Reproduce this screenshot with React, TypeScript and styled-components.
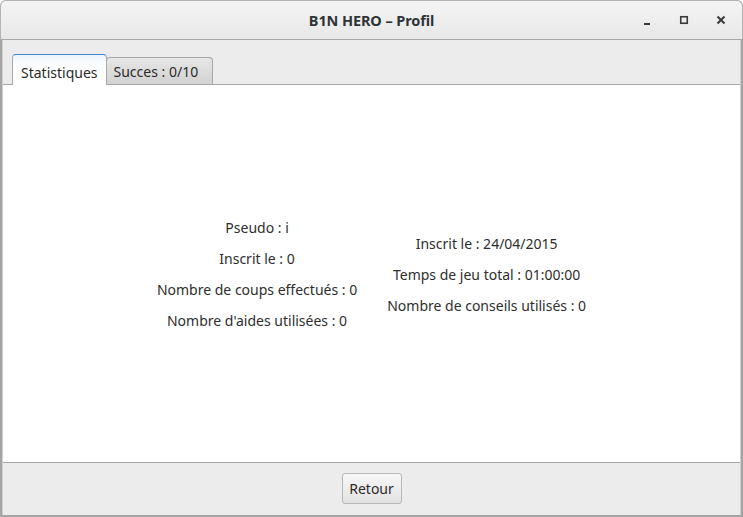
import React from "react";
import styled, { createGlobalStyle } from "styled-components";

const Global = createGlobalStyle`
  html, body { margin: 0; padding: 0; background: #ffffff; }
  body { font-family: "Noto Sans", "Open Sans", sans-serif; }
  * { box-sizing: border-box; }
`;

const Window = styled.div`
  width: 743px;
  height: 517px;
  display: flex;
  flex-direction: column;
  background: #a4a4a4;
  border-radius: 6px 6px 0 0;
  overflow: hidden;
`;

const TitleBar = styled.div`
  height: 40px;
  flex: none;
  display: flex;
  align-items: center;
  justify-content: center;
  position: relative;
  background: linear-gradient(#f4f4f4, #e8e8e8);
  border: 1px solid #b4b4b4;
  border-bottom-color: #a8a8a8;
  border-radius: 6px 6px 0 0;
`;

const Title = styled.div`
  font-family: "Noto Sans", sans-serif;
  font-weight: 700;
  font-size: 14.5px;
  color: #2e3436;
  letter-spacing: -0.1px;
`;

const Controls = styled.div`
  position: absolute;
  right: 3px;
  top: 0;
  height: 38px;
  display: flex;
  align-items: center;
`;

const CtrlButton = styled.div`
  width: 37px;
  height: 38px;
  display: flex;
  align-items: center;
  justify-content: center;
`;

const Body = styled.div`
  flex: 1;
  display: flex;
  flex-direction: column;
  margin: 0 2px 2px 2px;
  background: #ececec;
  border-left: 1px solid #d0d0d0;
  border-right: 1px solid #d0d0d0;
`;

const TabHeader = styled.div`
  height: 45px;
  flex: none;
  display: flex;
  align-items: flex-end;
  padding-left: 9px;
  border-bottom: 1px solid #a8a8a8;
  background: #ececec;
`;

const Tab = styled.div<{ $active?: boolean }>`
  height: ${(p) => (p.$active ? 31 : 27)}px;
  margin-bottom: ${(p) => (p.$active ? -1 : 0)}px;
  padding: 0 ${(p) => (p.$active ? 8 : 14)}px 0 ${(p) => (p.$active ? 8 : 7)}px;
  display: flex;
  align-items: center;
  padding-top: ${(p) => (p.$active ? 4 : 0)}px;
  font-size: 14px;
  color: #2a2a2a;
  border: 1px solid #a8a8a8;
  border-bottom: none;
  border-top: 1px solid ${(p) => (p.$active ? "#3a87d0" : "#a8a8a8")};
  border-radius: 4px 4px 0 0;
  background: ${(p) =>
    p.$active
      ? "linear-gradient(#eef4fb, #ffffff 40%, #ffffff)"
      : "linear-gradient(#e6e6e6, #d2d2d2)"};
  position: relative;
  z-index: ${(p) => (p.$active ? 2 : 1)};
  margin-left: ${(p) => (p.$active ? 0 : -1)}px;
`;

const Content = styled.div`
  flex: 1;
  background: #ffffff;
  display: flex;
  align-items: center;
  justify-content: center;
  gap: 30px;
  padding-top: 2px;
`;

const Column = styled.div`
  display: flex;
  flex-direction: column;
  align-items: center;
  gap: 13px;
`;

const Line = styled.div`
  font-size: 14px;
  line-height: 18px;
  color: #2e2e2e;
  white-space: nowrap;
`;

const Footer = styled.div`
  height: 53px;
  flex: none;
  border-top: 1px solid #a8a8a8;
  background: #ececec;
  display: flex;
  align-items: flex-start;
  justify-content: center;
  padding-top: 10px;
`;

const Button = styled.button`
  width: 60px;
  height: 31px;
  font-family: "Noto Sans", sans-serif;
  font-size: 14px;
  color: #2a2a2a;
  border: 1px solid #b8b8b8;
  border-radius: 3px;
  background: linear-gradient(#f8f8f8, #e2e2e2);
  padding: 0;
`;

export default function App() {
  return (
    <>
      <Global />
      <Window>
        <TitleBar>
          <Title>B1N HERO – Profil</Title>
          <Controls>
            <CtrlButton>
              <svg width="10" height="10" viewBox="0 0 10 10">
                <rect x="2" y="8" width="6" height="2" fill="#3a3a3a" />
              </svg>
            </CtrlButton>
            <CtrlButton>
              <svg width="10" height="10" viewBox="0 0 10 10">
                <rect x="1.75" y="1.75" width="6.5" height="6.5" fill="none" stroke="#3a3a3a" strokeWidth="1.6" />
              </svg>
            </CtrlButton>
            <CtrlButton>
              <svg width="10" height="10" viewBox="0 0 10 10">
                <path d="M1.5 1.5 L8.5 8.5 M8.5 1.5 L1.5 8.5" stroke="#3a3a3a" strokeWidth="2" />
              </svg>
            </CtrlButton>
          </Controls>
        </TitleBar>
        <Body>
          <TabHeader>
            <Tab $active>Statistiques</Tab>
            <Tab>Succes : 0/10</Tab>
          </TabHeader>
          <Content>
            <Column>
              <Line>Pseudo : i</Line>
              <Line>Inscrit le : 0</Line>
              <Line>Nombre de coups effectués : 0</Line>
              <Line>Nombre d'aides utilisées : 0</Line>
            </Column>
            <Column>
              <Line>Inscrit le : 24/04/2015</Line>
              <Line>Temps de jeu total : 01:00:00</Line>
              <Line>Nombre de conseils utilisés : 0</Line>
            </Column>
          </Content>
          <Footer>
            <Button>Retour</Button>
          </Footer>
        </Body>
      </Window>
    </>
  );
}
